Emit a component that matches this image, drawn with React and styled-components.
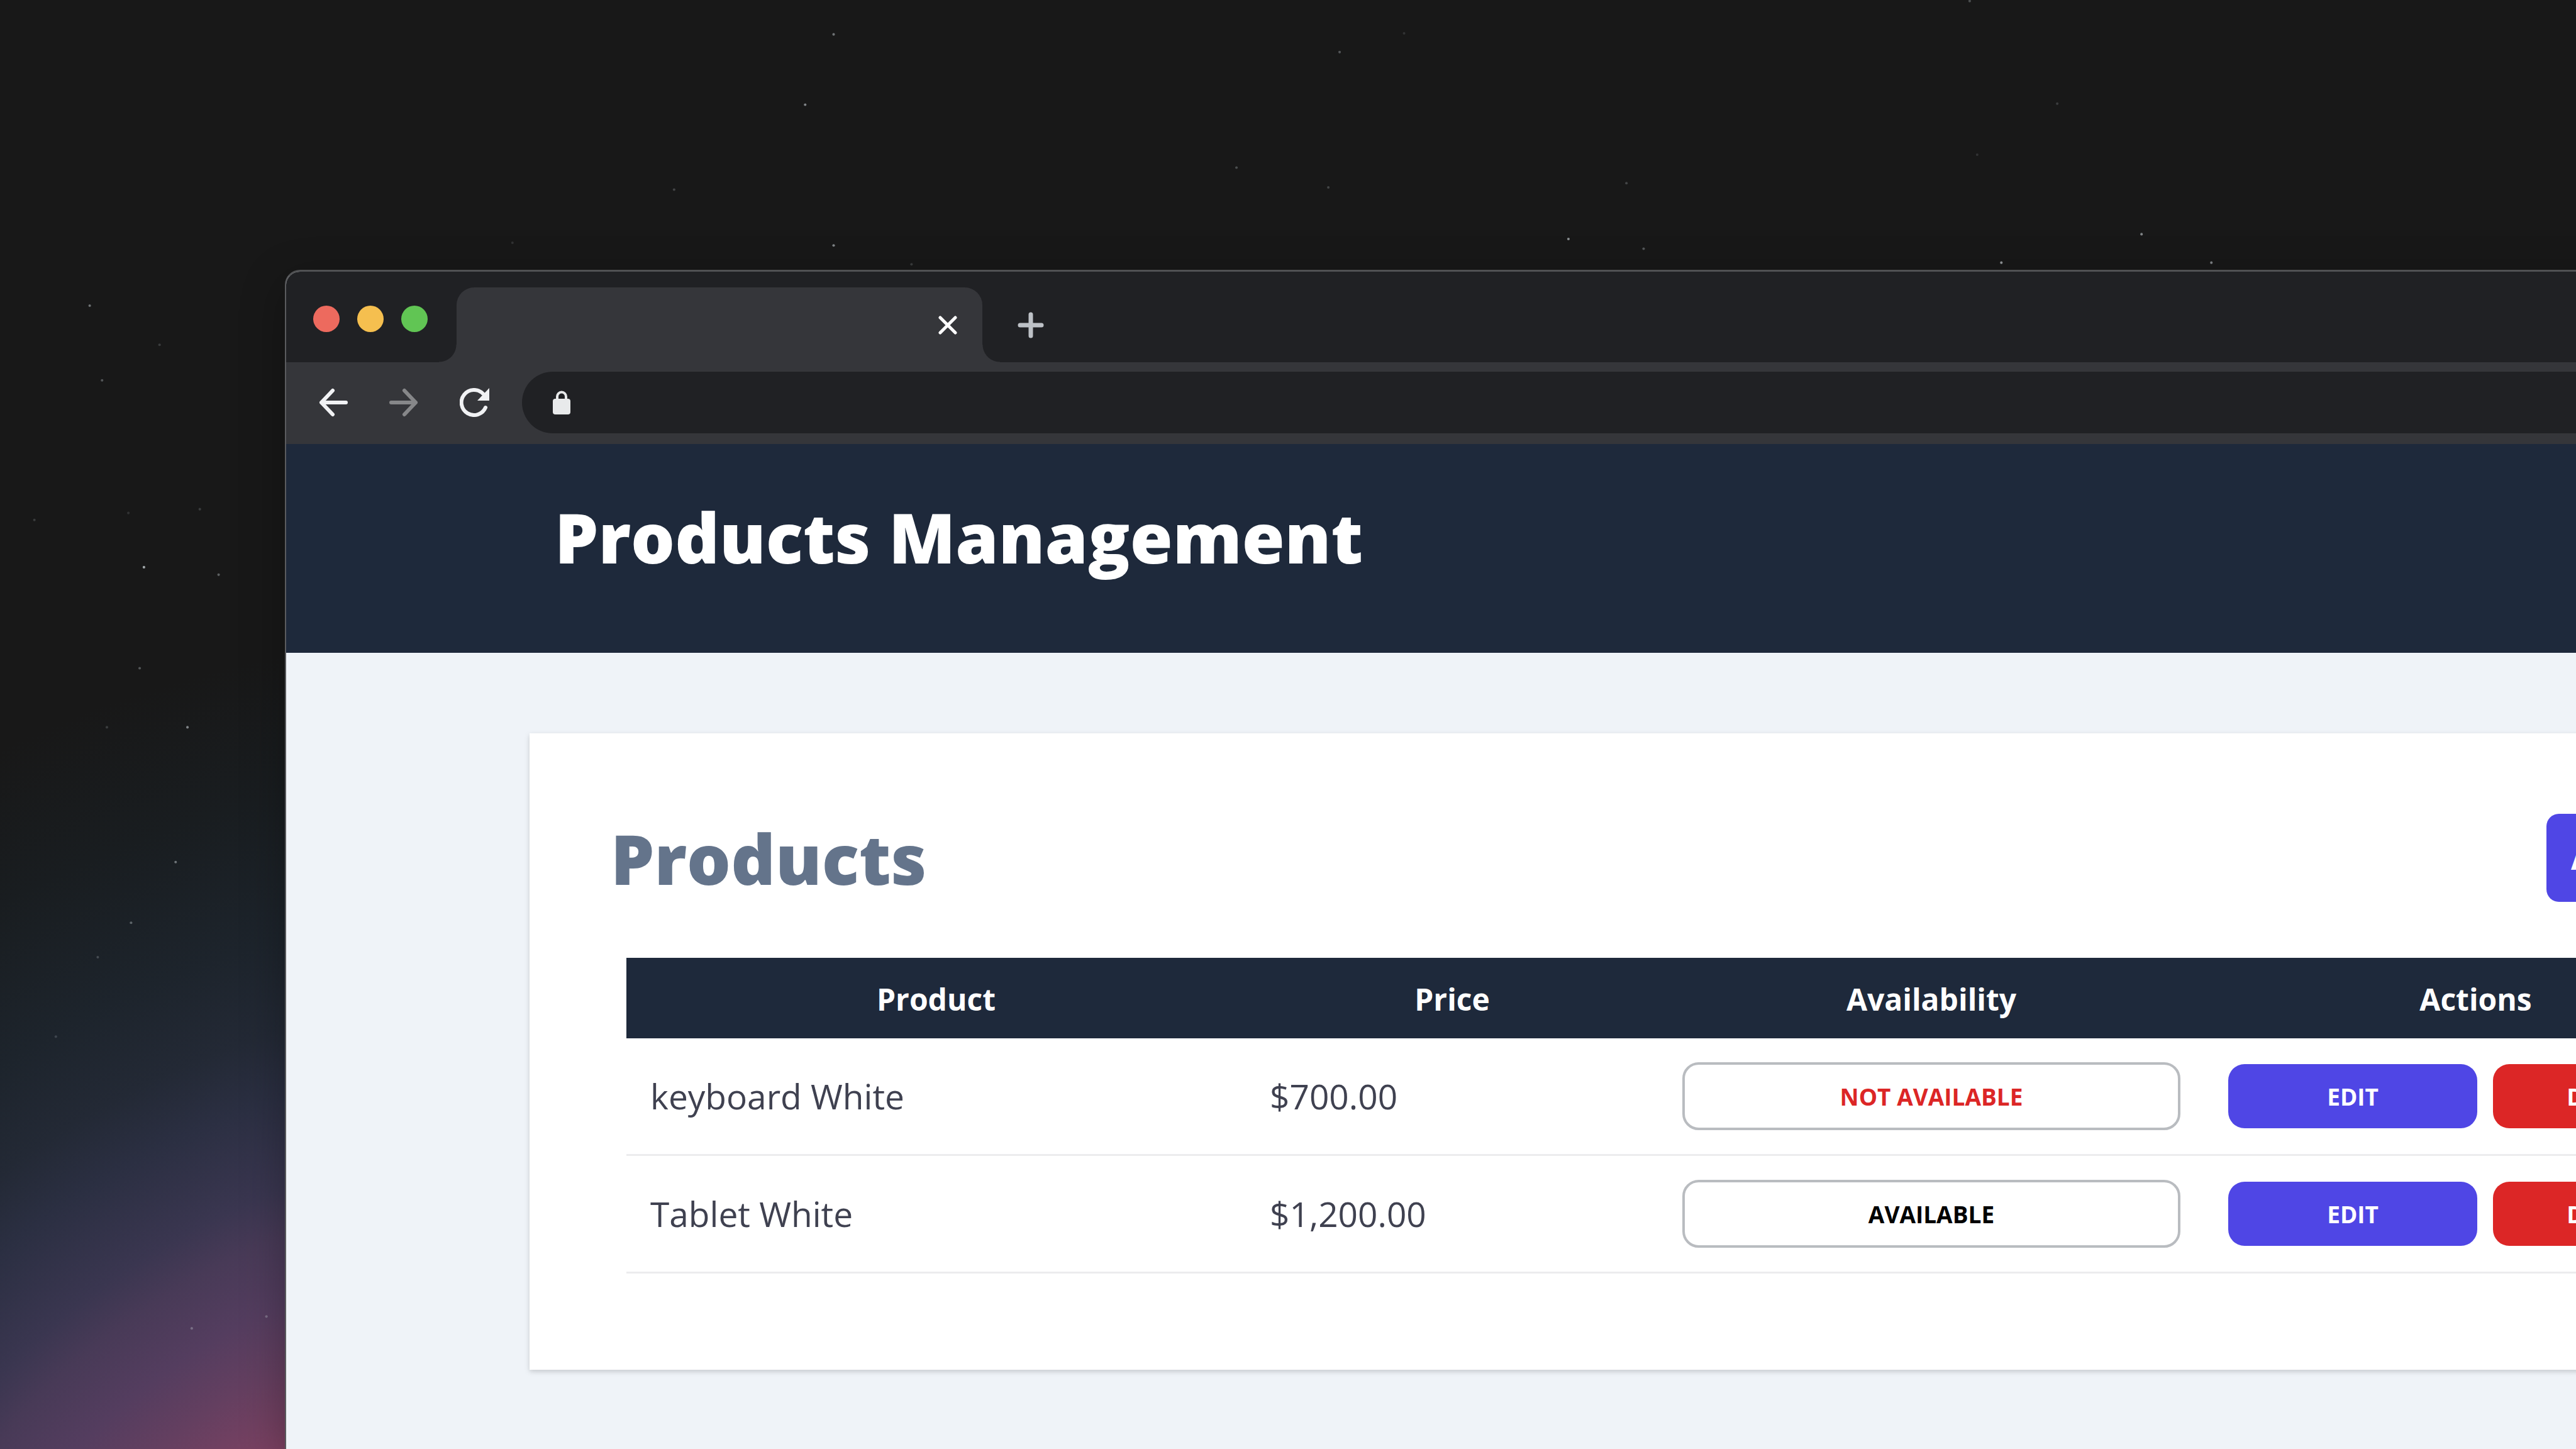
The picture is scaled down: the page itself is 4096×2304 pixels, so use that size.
import React from "react";
import styled, { createGlobalStyle } from "styled-components";

const GlobalStyle = createGlobalStyle`
  *, *::before, *::after { box-sizing: border-box; }
  html, body { margin: 0; overflow: hidden; }
  body { font-family: "Open Sans", "Noto Sans", sans-serif; background: #181818; }
  button, input { font: inherit; }
  h1, h2 { margin: 0; }
`;

const Desktop = styled.main`
  position: relative;
  min-height: 100vh;
  padding: 429px 0 0 453px;
  display: flex;
  overflow: hidden;
  background: radial-gradient(
    circle at 853px 3000px,
    #86405f 740px,
    #7c4162 804px,
    #643f60 920px,
    #543d5f 1010px,
    #483a57 1110px,
    #3a3650 1180px,
    #2b2f42 1320px,
    #232935 1420px,
    #1d242c 1560px,
    #191d20 1780px,
    #181818 2000px
  );
`;

const Sky = styled.svg`
  position: absolute;
  inset: 0;
  width: 100%;
  height: 100%;
`;

const Browser = styled.section`
  position: relative;
  flex: none;
  width: calc(100vw + 360px);
  display: flex;
  flex-direction: column;
  overflow: hidden;
  border-top: 3px solid #505153;
  border-left: 2px solid #5a5b5e;
  border-top-left-radius: 24px;
  background: #eff3f8;
  box-shadow: 0 20px 70px rgba(0, 0, 0, 0.3);
`;

const TabBar = styled.div`
  display: flex;
  align-items: center;
  padding: 25px 0 0 43px;
  background: #202124;
`;

const Lights = styled.div`
  display: flex;
  gap: 28px;
  margin: 0 46px 20px 0;
`;

const Light = styled.button`
  width: 42px;
  height: 42px;
  padding: 0;
  border: 0;
  border-radius: 50%;
  background: ${(p) => p.$color};
`;

const Tab = styled.div`
  position: relative;
  display: flex;
  align-items: center;
  justify-content: flex-end;
  width: 836px;
  height: 119px;
  padding-right: 40px;
  border-radius: 28px 28px 0 0;
  background: #35363a;

  &::before,
  &::after {
    content: "";
    position: absolute;
    bottom: 0;
    width: 28px;
    height: 28px;
  }
  &::before {
    right: 100%;
    background: radial-gradient(circle at 0 0, #202124 27px, #35363a 28px);
  }
  &::after {
    left: 100%;
    background: radial-gradient(circle at 100% 0, #202124 27px, #35363a 28px);
  }
`;

const IconButton = styled.button`
  display: flex;
  padding: 0;
  border: 0;
  background: none;
  color: ${(p) => p.$color || "#f1f2f4"};

  svg {
    display: block;
    fill: none;
    stroke: currentColor;
    stroke-linecap: round;
    stroke-linejoin: round;
  }
`;

const NewTab = styled(IconButton)`
  margin-left: 56px;
`;

const Toolbar = styled.div`
  display: flex;
  align-items: center;
  padding: 15px 0 17px 52px;
  background: #35363a;
`;

const NavButtons = styled.nav`
  display: flex;
  gap: 66px;
  margin-right: 51px;
`;

const Address = styled.label`
  flex: 1;
  display: flex;
  align-items: center;
  gap: 24px;
  height: 98px;
  padding: 0 49px;
  border-radius: 49px 0 0 49px;
  background: #202124;
`;

const AddressInput = styled.input`
  flex: 1;
  border: 0;
  outline: 0;
  background: none;
  color: #e8eaed;
  font-size: 37px;
`;

const PageHeader = styled.header`
  padding: 83px 427px 121px;
  background: #1e293b;
`;

const Title = styled.h1`
  font-size: 110px;
  font-weight: 800;
  line-height: 128px;
  color: #fff;
`;

const Content = styled.div`
  padding: 128px 387px;
`;

const Card = styled.section`
  padding: 128px 129px;
  background: #fff;
  box-shadow: 0 3px 10px rgba(0, 0, 0, 0.1), 0 3px 6px rgba(0, 0, 0, 0.08);
`;

const CardHead = styled.div`
  display: flex;
  align-items: center;
  justify-content: space-between;
`;

const Heading = styled.h2`
  font-size: 110px;
  font-weight: 800;
  line-height: 128px;
  color: #64748b;
`;

const AddButton = styled.button`
  width: 344px;
  height: 140px;
  padding: 0 0 0 39px;
  border: 0;
  border-radius: 20px;
  background: #4f46e5;
  color: #fff;
  font-size: 48px;
  font-weight: 700;
  text-align: left;
  white-space: nowrap;
`;

const TableWrap = styled.div`
  margin-top: 64px;
  padding: 25px;
`;

const Table = styled.table`
  width: 100%;
  table-layout: fixed;
  border-spacing: 0;
`;

const Col = styled.col`
  width: ${(p) => p.$width};
`;

const HeadCell = styled.th`
  padding: 34px 0 30px;
  background: #1e293b;
  color: #fff;
  font-size: 48px;
  font-weight: 700;
  line-height: 64px;
`;

const Cell = styled.td`
  padding: 38px 38px;
  border-bottom: 3px solid #ececee;
  color: #3f4150;
  font-size: 55px;
  line-height: 80px;
`;

const PillButton = styled.button`
  display: block;
  width: 100%;
  height: ${(p) => (p.$outline ? 108 : 102)}px;
  padding: 2px 0 0;
  border: ${(p) => (p.$outline ? "4px solid #b9bcc0" : "0")};
  border-radius: 26px;
  background: ${(p) => p.$background || "#fff"};
  color: ${(p) => p.$color || "#fff"};
  font-size: 37px;
  font-weight: 700;
  line-height: 50px;
  text-transform: uppercase;
`;

const Actions = styled.div`
  display: grid;
  grid-template-columns: 13fr 12fr;
  gap: 25px;
`;

const stars = [
  [1552, 64, 0.5], [2494, 97, 0.35], [1499, 195, 0.6], [2302, 312, 0.3], [1255, 353, 0.25],
  [2473, 349, 0.25], [954, 452, 0.15], [1552, 457, 0.6], [1697, 492, 0.2], [2614, 62, 0.15],
  [3028, 341, 0.25], [3830, 193, 0.2], [3681, 288, 0.15], [2920, 445, 0.65], [3060, 463, 0.35],
  [3726, 489, 0.7], [3987, 436, 0.6], [4117, 489, 0.6], [3667, 2, 0.3], [167, 569, 0.5],
  [297, 642, 0.2], [190, 708, 0.35], [64, 968, 0.2], [239, 955, 0.15], [372, 948, 0.2],
  [268, 1056, 0.8], [407, 1070, 0.4], [260, 1244, 0.35], [199, 1354, 0.2], [349, 1354, 0.6],
  [327, 1605, 0.5], [244, 1718, 0.4], [182, 1782, 0.25], [104, 1930, 0.2], [357, 2473, 0.35],
  [496, 2451, 0.35],
];

const products = [
  { name: "keyboard White", price: "$700.00", available: false },
  { name: "Tablet White", price: "$1,200.00", available: true },
];

function StarField() {
  return (
    <Sky viewBox="0 0 4800 2700" preserveAspectRatio="xMinYMin slice" aria-hidden="true">
      {stars.map(([x, y, o]) => (
        <circle key={`${x}-${y}`} cx={x} cy={y} r="2.4" fill="#c4ccd0" opacity={o} />
      ))}
    </Sky>
  );
}

function Chrome() {
  return (
    <>
      <TabBar>
        <Lights>
          <Light $color="#ed6a5e" aria-label="Close window" />
          <Light $color="#f5bf4f" aria-label="Minimize window" />
          <Light $color="#61c554" aria-label="Zoom window" />
        </Lights>
        <Tab>
          <IconButton $color="#ffffff" aria-label="Close tab">
            <svg width="30" height="30" strokeWidth="5">
              <path d="M3 3L27 27M27 3L3 27" />
            </svg>
          </IconButton>
        </Tab>
        <NewTab $color="#bdc1c6" aria-label="New tab">
          <svg width="42" height="42" strokeWidth="7">
            <path d="M21 4V38M4 21H38" />
          </svg>
        </NewTab>
      </TabBar>
      <Toolbar>
        <NavButtons aria-label="History">
          <IconButton aria-label="Back">
            <svg width="46" height="46" strokeWidth="6">
              <path d="M43 23H4M22 4L4 23L22 42" />
            </svg>
          </IconButton>
          <IconButton $color="#868789" aria-label="Forward">
            <svg width="46" height="46" strokeWidth="6">
              <path d="M3 23H42M24 4L42 23L24 42" />
            </svg>
          </IconButton>
          <IconButton aria-label="Reload">
            <svg width="48" height="46" strokeWidth="6">
              <path d="M41 31A20 20 0 1 1 37 9" />
              <path d="M47 0V20H28Z" fill="currentColor" stroke="none" />
            </svg>
          </IconButton>
        </NavButtons>
        <Address>
          <svg width="28" height="38" aria-hidden="true">
            <path d="M7 15V9.500A7 7 0 0 1 21 9.500V15" fill="none" stroke="#e8eaeb" strokeWidth="4" />
            <rect y="13" width="28" height="25" rx="4" fill="#e8eaeb" />
          </svg>
          <AddressInput type="text" aria-label="Address" />
        </Address>
      </Toolbar>
    </>
  );
}

function ProductRow({ product }) {
  return (
    <tr>
      <Cell>{product.name}</Cell>
      <Cell>{product.price}</Cell>
      <Cell>
        <PillButton $outline $color={product.available ? "#000" : "#dc2626"}>
          {product.available ? "Available" : "Not available"}
        </PillButton>
      </Cell>
      <Cell>
        <Actions>
          <PillButton $background="#4f46e5">Edit</PillButton>
          <PillButton $background="#dc2626">Delete</PillButton>
        </Actions>
      </Cell>
    </tr>
  );
}

export default function App() {
  return (
    <>
      <GlobalStyle />
      <Desktop>
        <StarField />
        <Browser>
          <Chrome />
          <PageHeader>
            <Title>Products Management</Title>
          </PageHeader>
          <Content>
            <Card>
              <CardHead>
                <Heading>Products</Heading>
                <AddButton>Add Product</AddButton>
              </CardHead>
              <TableWrap>
                <Table>
                  <colgroup>
                    <Col $width="985px" />
                    <Col $width="656px" />
                    <Col $width="868px" />
                    <Col $width="auto" />
                  </colgroup>
                  <thead>
                    <tr>
                      <HeadCell scope="col">Product</HeadCell>
                      <HeadCell scope="col">Price</HeadCell>
                      <HeadCell scope="col">Availability</HeadCell>
                      <HeadCell scope="col">Actions</HeadCell>
                    </tr>
                  </thead>
                  <tbody>
                    {products.map((product) => (
                      <ProductRow key={product.name} product={product} />
                    ))}
                  </tbody>
                </Table>
              </TableWrap>
            </Card>
          </Content>
        </Browser>
      </Desktop>
    </>
  );
}
